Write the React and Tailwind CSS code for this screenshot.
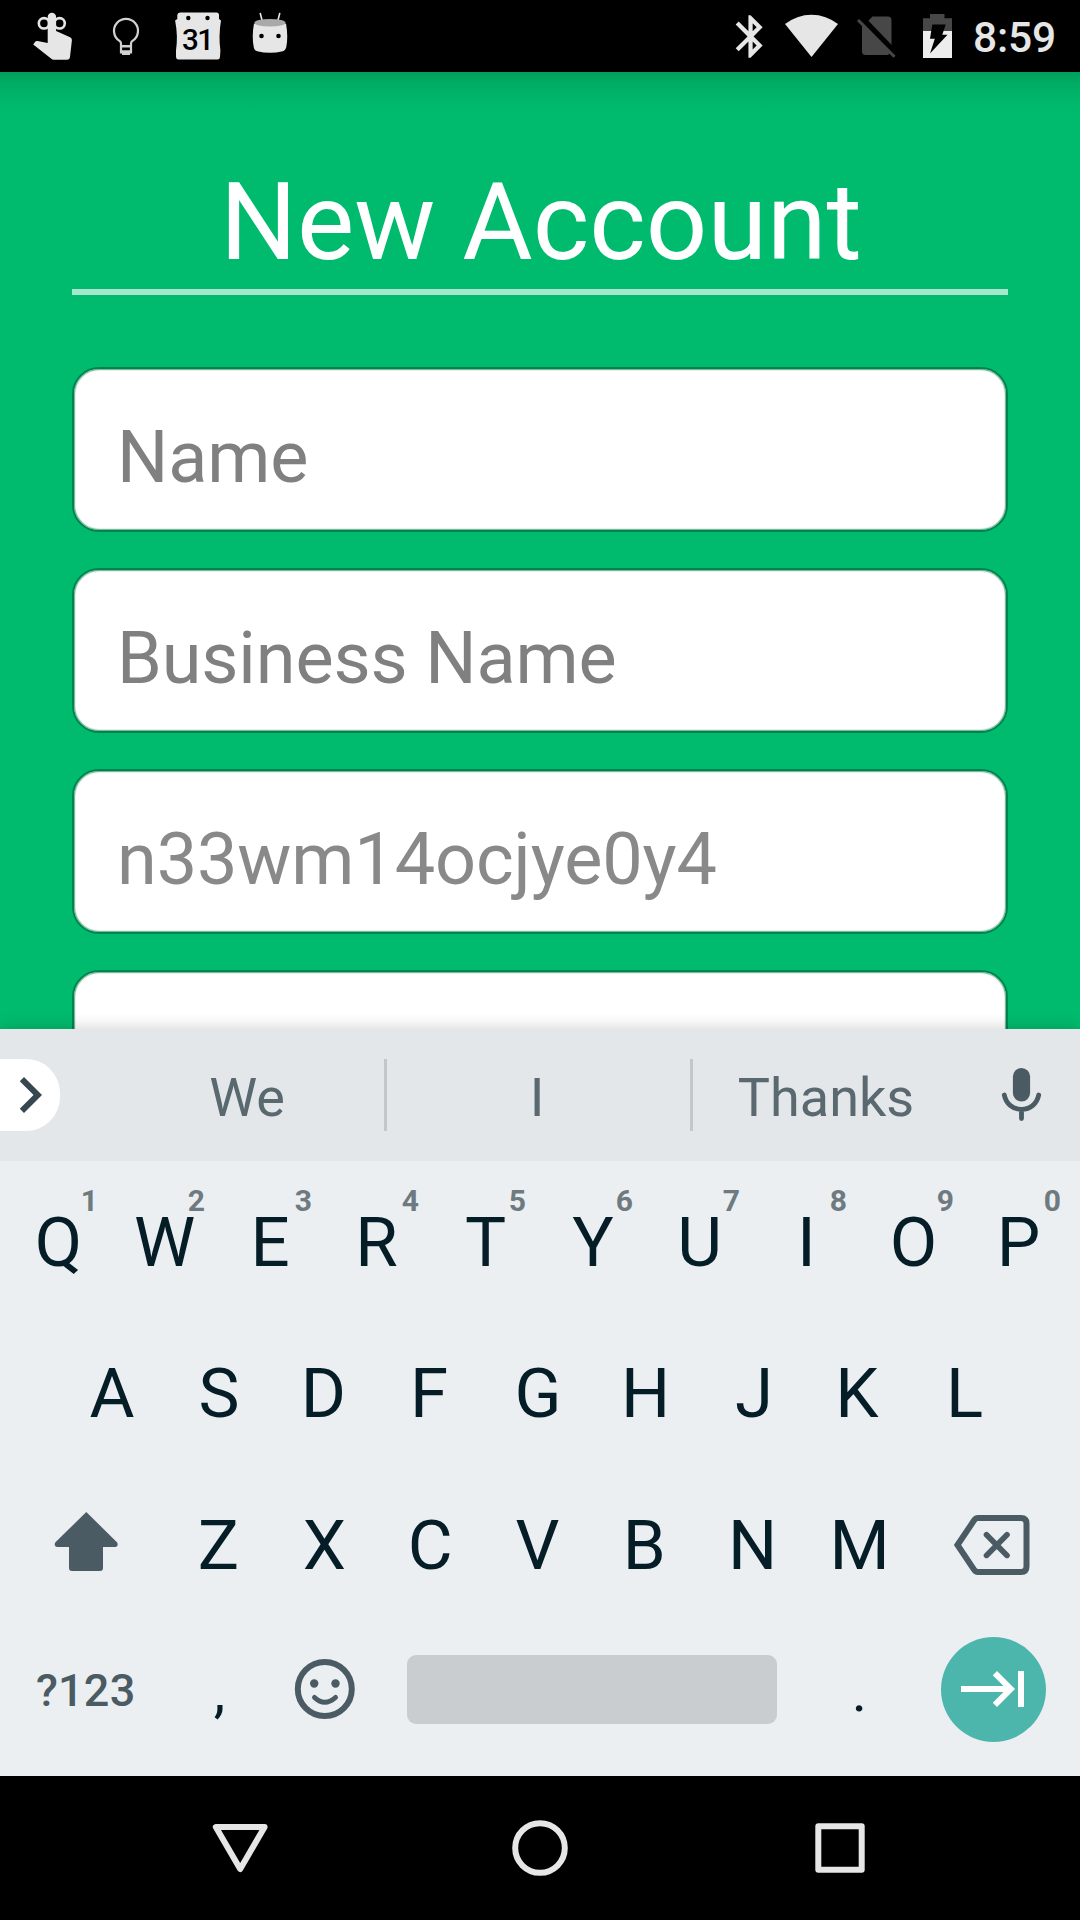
import React from "react";

const FIELDS = [
  { text: "Name", tone: "placeholder:text-[#808080]" },
  { text: "Business Name", tone: "placeholder:text-[#808080]" },
  { text: "n33wm14ocjye0y4", tone: "placeholder:text-[#898989]" },
  { text: "", tone: "" },
];
const ROW_ONE = ["Q", "W", "E", "R", "T", "Y", "U", "I", "O", "P"];
const ROW_TWO = ["A", "S", "D", "F", "G", "H", "J", "K", "L"];
const ROW_THREE = ["Z", "X", "C", "V", "B", "N", "M"];

const NUDGE = {
  W: 1, E: 2.5, R: 3, T: 1, Y: 0.5, U: 1, I: 1, O: 1, P: 3,
  D: 2.5, F: 4, G: 2, H: 1.5, K: 4, L: 3.5,
  X: 1, C: 2, V: 1.5, B: 1.5,
};

function StatusBar() {
  return (
    <header className="flex h-[72px] shrink-0 items-center justify-between bg-black">
      <div className="flex">
        <svg width="92" height="72" viewBox="0 0 92 72" fill="#e6e6e6">
          <g fill="none" stroke="#e6e6e6" strokeWidth="2.6">
            <ellipse cx="44" cy="23.3" rx="5.2" ry="5.2" />
            <ellipse cx="59.6" cy="23.3" rx="5.2" ry="5.2" />
          </g>
          <path d="M47.7 17a4.2 4.2 0 0 1 8.4 0V31l14 6.2q2 1 1.8 3L70 57q-.4 2.7-3 2.7H54q-1.8 0-3-1.2L33.2 44.5l1.8-2.6q1-1.1 2.5-.8L47.7 43z" />
        </svg>
        <svg width="68" height="72" viewBox="92 0 68 72">
          <path d="M121 52.5V43.5Q121 42 119.5 40.9A12 12 0 1 1 132.5 40.9Q131 42 131 43.5V52.5z" fill="none" stroke="#d0d2d0" strokeWidth="2.2" />
          <path d="M120.500 45h11v2.600h-11zM120.500 50.200h11v2.400h-1.500v2.300h-8v-2.300h-1.500z" fill="#d0d2d0" />
        </svg>
        <svg width="76" height="72" viewBox="160 0 76 72">
          <path d="M180 12.500h36.500q2.500 0 2.500 2.500v4l2 1.500q-2.600 15.500-.6 30l-.4 6.500q-.2 2.500-2.500 2.500H178.500q-2.300 0-2.500-2.500v-6.500q2.200-14.500-.9-30L177.300 19v-4q.2-2.500 2.700-2.500z" fill="#e6e6e6" />
          <circle cx="188.300" cy="18" r="2.200" />
          <circle cx="207.500" cy="18" r="2.200" />
          <text x="197.300" y="50.200" textAnchor="middle" className="font-['Roboto'] text-[29.500px] font-medium tracking-[-1.500px]">31</text>
        </svg>
        <svg width="68" height="72" viewBox="236 0 68 72">
          <path d="M260.300 13.500l2.300 9M279.700 13.500l-2.300 9" stroke="#e6e6e6" strokeWidth="1.600" strokeLinecap="round" />
          <path d="M254 23.500Q270 28 286 23.500q2.400 13 .2 24q-.6 2.800-3.400 3.800q-12.800 3-25.600 0q-2.800-1-3.400-3.800q-2.200-11 .2-24z" fill="#e6e6e6" />
          <ellipse cx="270" cy="22.800" rx="15.600" ry="3.800" fill="#a9a9a9" />
          <circle cx="261.500" cy="36" r="2.300" />
          <circle cx="278.500" cy="36" r="2.300" />
        </svg>
      </div>
      <div className="flex">
        <svg width="54" height="72" viewBox="720 0 54 72">
          <path transform="translate(725.100 11) scale(2.120)" fill="#e6e6e6" d="M17.710 7.710L12 2h-1v7.590L6.410 5 5 6.410 10.590 12 5 17.590 6.410 19 11 14.410V22h1l5.710-5.710-4.300-4.290 4.300-4.290zM13 5.830l1.880 1.880L13 9.590V5.830zm1.880 10.460L13 18.170v-3.760l1.880 1.880z" />
        </svg>
        <svg width="74" height="72" viewBox="774 0 74 72">
          <path d="M785 24A43 43 0 0 1 838 24L811.500 57z" fill="#e6e6e6" />
        </svg>
        <svg width="58" height="72" viewBox="848 0 58 72">
          <path d="M862 22.500L867.500 21.500 872.500 16.500H888q3.500 0 3.500 3.500V51.500L888 55H865.500q-3.500 0-3.500-3.500z" fill="#474747" />
          <path d="M859 15L895 52.500" stroke="#000" strokeWidth="5.500" />
          <path d="M858 20L894.500 56.800" stroke="#474747" strokeWidth="3" />
        </svg>
        <svg width="57" height="72" viewBox="906 0 57 72">
          <path d="M930 14h14.500v4.300H952V31H923V18.300h7z" fill="#474747" />
          <path d="M923 31h29v27h-29z" fill="#ededed" />
          <path d="M932.300 24.500h13.400l-3.400 10.300h5.200L930 53.500l4.800-14.800H930z" />
        </svg>
        <span className="h-[72px] w-[117px] pl-[10px] pt-[2px] text-[42.500px] leading-[72px] font-medium tracking-[-0.200px] text-[#e6e6e6]">8:59</span>
      </div>
    </header>
  );
}

function Key({ label, hint }) {
  return (
    <div className="relative flex flex-1 items-center justify-center text-[69px] leading-[56px] text-[#051d27]">
      <span style={{ marginRight: 2 * (NUDGE[label] || 0) }}>{label}</span>
      {hint && <span className="absolute top-[22px] right-[14px] text-[30px] leading-[24px] font-bold text-[#6e7a80]">{hint}</span>}
    </div>
  );
}

function Suggestions() {
  return (
    <div className="flex h-[132px] items-center bg-[#e3e7ea] text-[54px] leading-none text-[#5a686f]">
      <div className="h-[72px] w-[60px] rounded-r-[34px] bg-white">
        <svg width="60" height="72" viewBox="6 0 60 72">
          <path transform="scale(3)" fill="#37474f" d="M10 6L8.590 7.410 13.170 12l-4.580 4.590L10 18l6-6z" />
        </svg>
      </div>
      <div className="ml-[50px] w-[274px] pt-[6px] text-center">We</div>
      <div className="h-[72px] w-[3px] bg-[#c2c7ca]" />
      <div className="w-[303px] pt-[6px] pr-[3px] text-center">I</div>
      <div className="h-[72px] w-[3px] bg-[#c2c7ca]" />
      <div className="w-[266px] pt-[6px] text-center">Thanks</div>
      <svg className="ml-auto mr-8" width="54" height="72" viewBox="994 1059 54 72">
        <rect x="1012.900" y="1068" width="17.200" height="33.500" rx="8.600" fill="#4a5b63" />
        <path d="M1004.300 1095C1006 1103.500 1012.500 1109.300 1021.500 1109.300S1037 1103.500 1038.700 1095M1021.500 1110v8.500" fill="none" stroke="#4a5b63" strokeWidth="4.800" strokeLinecap="round" />
      </svg>
    </div>
  );
}

function Keyboard() {
  return (
    <section className="relative z-10 flex h-[747px] shrink-0 flex-col bg-[#ebeff2] shadow-[0_-2px_14px_rgba(0,0,0,0.16)]">
      <Suggestions />
      <div className="mt-[6px] flex h-[151px] px-[5px]">
        {ROW_ONE.map((k, i) => (
          <Key key={k} label={k} hint={String((i + 1) % 10)} />
        ))}
      </div>
      <div className="flex h-[151px] px-[58.500px]">
        {ROW_TWO.map((k) => (
          <Key key={k} label={k} />
        ))}
      </div>
      <div className="flex h-[152px]">
        <svg width="165" height="152" viewBox="0 1469 165 152">
          <path d="M86.300 1512L117.200 1542.500Q118.800 1546.500 115.500 1547H103V1568Q103 1571 100 1571H72Q69 1571 69 1568V1547H57Q53.600 1546.500 55.200 1542.500z" fill="#4a5b63" />
        </svg>
        <div className="flex w-[748px] pt-[2px]">
          {ROW_THREE.map((k) => (
            <Key key={k} label={k} />
          ))}
        </div>
        <svg width="167" height="152" viewBox="913 1469 167 152" fill="none" stroke="#4a5b63">
          <path d="M957.500 1545L974 1520.500Q975.500 1518 978 1518H1021Q1026.500 1518 1026.500 1523.500V1566.500Q1026.500 1572 1021 1572H978Q975.500 1572 974 1569.500z" strokeWidth="6" />
          <path d="M986.500 1534.800L1007 1555.400M1007 1534.800L986.500 1555.400" strokeWidth="5.600" strokeLinecap="round" />
        </svg>
      </div>
      <div className="flex h-[136px] items-center">
        <div className="w-[165px] pl-[36px] pt-[3px] text-[45px] leading-none font-medium tracking-[0.200px] text-[#4a5b63]">?123</div>
        <div className="w-[107px] pt-[4px] pl-[2px] text-center text-[58px] leading-none text-[#051d27]">,</div>
        <svg width="107" height="136" viewBox="272 1621 107 136" fill="none" stroke="#4a5b63">
          <circle cx="324.800" cy="1689" r="27" strokeWidth="6" />
          <circle cx="314.200" cy="1683.500" r="4.200" fill="#4a5b63" stroke="none" />
          <circle cx="335.500" cy="1683.500" r="4.200" fill="#4a5b63" stroke="none" />
          <path d="M314.500 1697.500Q324.800 1707 335.500 1697.500" strokeWidth="5" strokeLinecap="round" />
        </svg>
        <div className="ml-[28px] h-[69px] w-[370px] rounded-[9px] bg-[#c9cdd0]" />
        <div className="ml-[28px] w-[107px] pt-[4px] pl-[2px] text-center text-[58px] leading-none text-[#051d27]">.</div>
        <div className="ml-[28.500px] flex size-[105px] items-center justify-center rounded-full bg-[#4db6ac] pl-[2px]">
          <svg width="72" height="72" viewBox="0 0 24 24" fill="#fff">
            <path d="M11.590 7.410L15.170 11H1v2h14.170l-3.590 3.590L13 18l6-6-6-6-1.410 1.410zM20 6v12h2V6h-2z" />
          </svg>
        </div>
      </div>
    </section>
  );
}

function NavBar() {
  return (
    <nav className="relative z-10 flex h-[144px] shrink-0 items-center justify-center gap-[240px] bg-black">
      <svg width="60" height="60" viewBox="210 1818 60 60" fill="none" stroke="#e6e6e6" strokeWidth="6" strokeLinejoin="round">
        <path d="M215.800 1827H264.600L240.200 1869z" />
      </svg>
      <svg width="60" height="60" viewBox="0 0 60 60" fill="none" stroke="#e6e6e6" strokeWidth="6">
        <circle cx="30" cy="30" r="24.800" />
      </svg>
      <svg width="60" height="60" viewBox="0 0 60 60" fill="none" stroke="#e6e6e6" strokeWidth="6" strokeLinejoin="round">
        <rect x="8.300" y="8.300" width="43.400" height="43.400" />
      </svg>
    </nav>
  );
}

export default function App() {
  return (
    <div className="flex h-[1920px] w-[1080px] flex-col overflow-hidden bg-[#00bb6d] font-['Roboto',sans-serif]">
      <StatusBar />
      <main className="flex h-[957px] shrink-0 flex-col overflow-hidden bg-[linear-gradient(#009d5b_0px,#00ad64_12px,#00b86b_32px,#00bb6d_44px)] px-[72px] pt-[90px]">
        <h1 className="pl-[2px] text-center text-[108px] leading-[120px] text-white">New Account</h1>
        <div className="mt-[7px] h-[6px] shrink-0 bg-[#a6e8cb]" />
        <form className="mt-[72px] flex flex-col gap-[36px]">
          {FIELDS.map((f) => (
            <input
              key={f.text}
              type="text"
              placeholder={f.text}
              className={`h-[165px] w-full shrink-0 rounded-[27px] border-2 border-[#00844f] bg-white px-[43px] pt-4 text-[72px] tracking-[-0.120px] shadow-[inset_0_0_0_1px_#7ab898,inset_0_0_0_2px_#e6f3ec] outline-none ${f.tone}`}
            />
          ))}
        </form>
      </main>
      <Keyboard />
      <NavBar />
    </div>
  );
}
